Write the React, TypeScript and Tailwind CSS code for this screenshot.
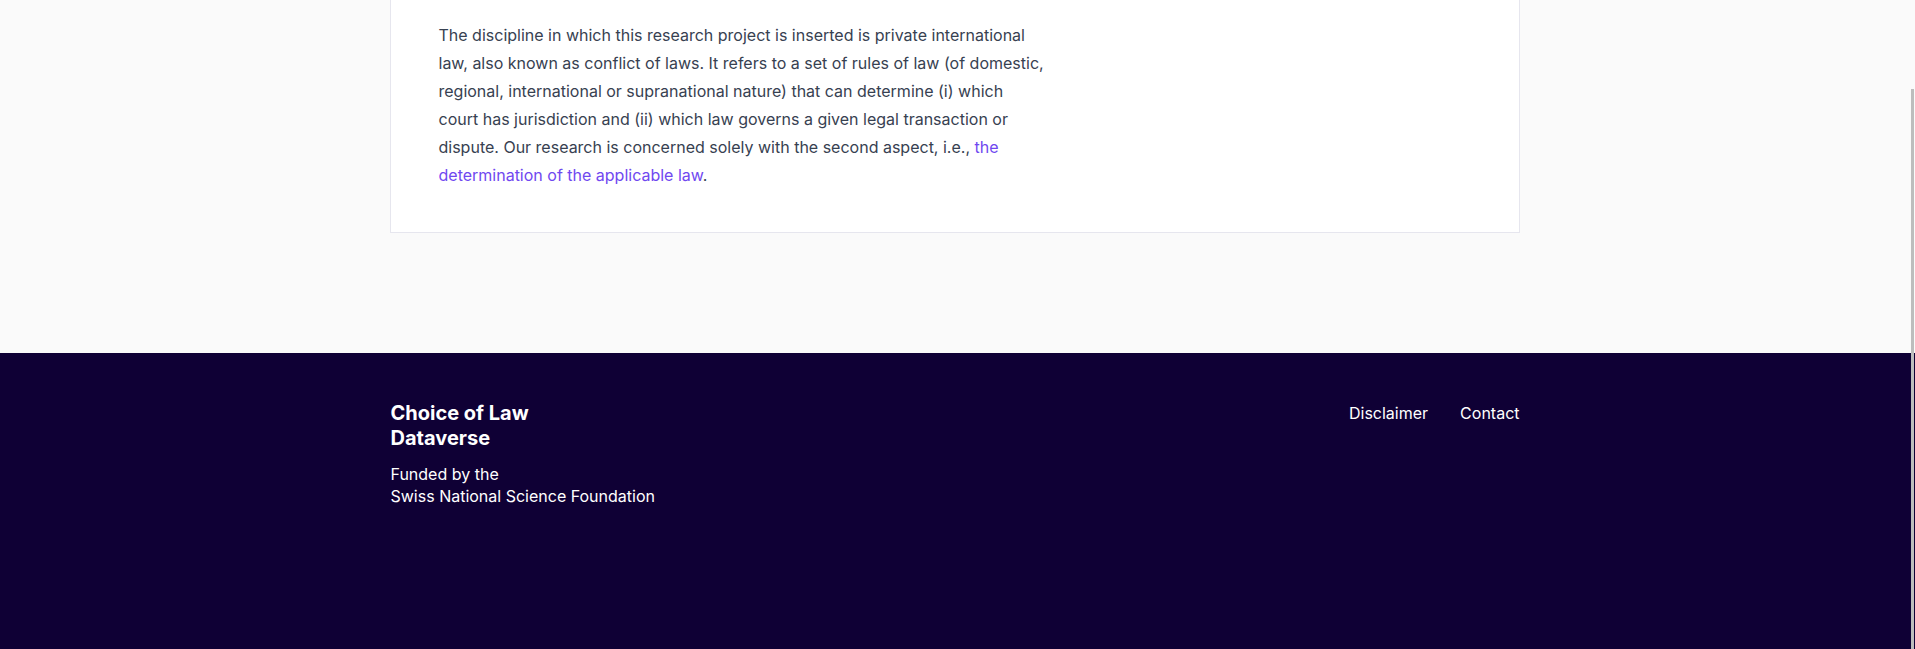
const App = () => {
  return (
    <div className="relative min-h-screen bg-[#fafafa] font-['Inter',sans-serif]">
      <div className="pr-[6px]">
        <main className="pb-[120px]">
          <div className="w-[1130px] mx-auto bg-white border-x border-b border-[#e6e6ee] pt-[21px] px-12 pb-[43px]">
            <p className="max-w-[620px] text-base leading-7 text-[#374151]">
              The discipline in which this research project is inserted is private international
              <br />
              law, also known as conflict of laws. It refers to a set of rules of law (of domestic,
              <br />
              regional, international or supranational nature) that can determine (i) which
              <br />
              court has jurisdiction and (ii) which law governs a given legal transaction or
              <br />
              dispute. Our research is concerned solely with the second aspect, i.e.,{" "}
              <a href="#" className="text-[#7048f0]">
                the
                <br />
                determination of the applicable law
              </a>
              .
            </p>
          </div>
        </main>
      </div>

      <footer className="h-[296px] bg-[#0f0035] pr-[6px]">
        <div className="w-[1130px] mx-auto pt-12 pl-px flex justify-between items-start">
          <div>
            <div className="w-[160px] text-xl leading-tight font-bold text-white">Choice of Law Dataverse</div>
            <div className="mt-3 text-base leading-[22px] text-white">
              Funded by the
              <br />
              Swiss National Science Foundation
            </div>
          </div>
          <nav className="flex gap-8 text-base text-white">
            <a href="#">Disclaimer</a>
            <a href="#">Contact</a>
          </nav>
        </div>
      </footer>

      <div className="absolute right-px top-[89px] bottom-0 w-[3px] bg-[#bdbdbd]" />
    </div>
  );
};

export default App;
